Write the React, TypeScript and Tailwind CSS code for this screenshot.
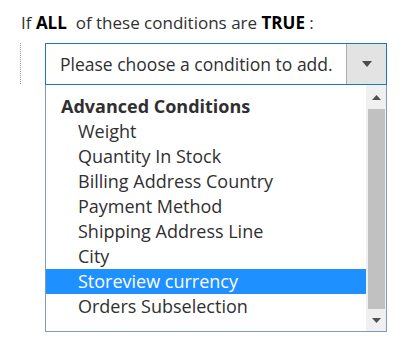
const items = [
  "Weight",
  "Quantity In Stock",
  "Billing Address Country",
  "Payment Method",
  "Shipping Address Line",
  "City",
  "Storeview currency",
  "Orders Subselection",
];

export default function App() {
  return (
    <div className="w-[410px] h-[350px] bg-white text-[#303030] font-['Open_Sans',sans-serif] text-[16px]">
      <div className="pl-[21px] pt-[11px] leading-[23px] text-[17px]">
        If <b className="text-black">ALL</b>&nbsp; of these conditions are <b className="text-black">TRUE</b> :
      </div>
      <div className="flex pl-[20px] pt-[9px]">
        <div className="w-px h-[41px] border-l border-dotted border-[#999]" />
        <div className="ml-[24px] w-[342px]">
          {/* select */}
          <div className="flex h-[42px] border border-[#1979c3]">
            <div className="flex-1 pl-[14px] flex items-center text-[17.5px]">Please choose a condition to add.</div>
            <div className="w-[40px] bg-[#e3e3e3] border-l border-[#adadad] flex items-center justify-center">
              <svg width="10" height="6" viewBox="0 0 10 6">
                <path d="M0 0h10L5 6z" fill="#514943" />
              </svg>
            </div>
          </div>
          {/* list */}
          <div className="flex h-[247px] border border-t-0 border-[#7f9db9] text-[18px]">
            <div className="flex-1 pt-[9px]">
              <div className="h-[25px] leading-[25px] pl-[15px] font-bold text-[#303030]">Advanced Conditions</div>
              {items.map((it) => (
                <div
                  key={it}
                  className={`h-[25px] leading-[25px] pl-[32px] ${
                    it === "Storeview currency" ? "bg-[#1e90ff] text-white" : ""
                  }`}
                >
                  {it}
                </div>
              ))}
            </div>
            <div className="w-[20px] bg-[#f0f0f0] flex flex-col items-center">
              <div className="h-[24px] w-full flex items-center justify-center">
                <svg width="9" height="5" viewBox="0 0 9 5">
                  <path d="M0 5h9L4.5 0z" fill="#505050" />
                </svg>
              </div>
              <div className="w-[17px] h-[200px] bg-[#c1c1c1]" />
              <div className="flex-1 w-full flex items-center justify-center">
                <svg width="9" height="5" viewBox="0 0 9 5">
                  <path d="M0 0h9L4.5 5z" fill="#505050" />
                </svg>
              </div>
            </div>
          </div>
        </div>
      </div>
    </div>
  );
}
